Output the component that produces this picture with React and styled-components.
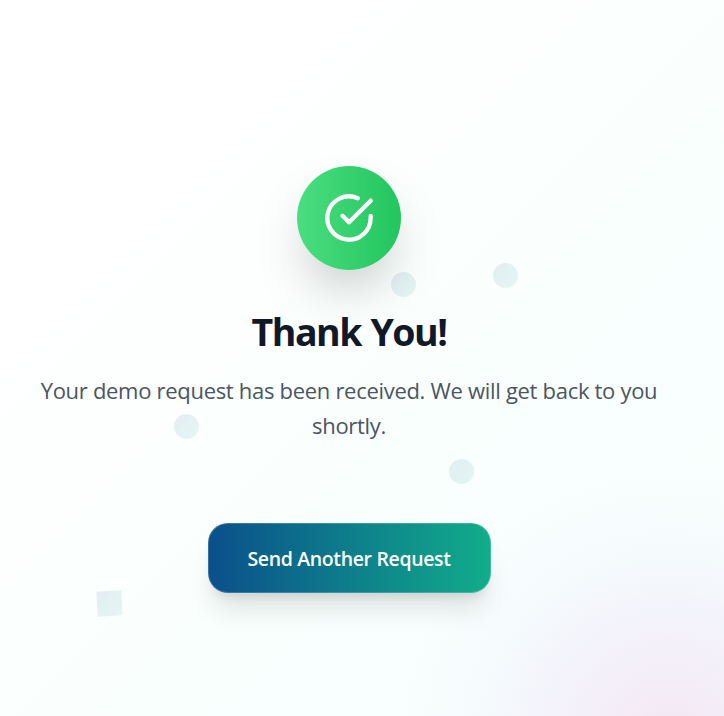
import React from "react";
import styled, { createGlobalStyle } from "styled-components";

const GlobalStyle = createGlobalStyle`
  *, *::before, *::after { box-sizing: border-box; }
  body { margin: 0; }
`;

const Page = styled.main`
  position: relative;
  display: flex;
  flex-direction: column;
  align-items: center;
  width: 100%;
  height: 716px;
  padding: 166px 26px 0 0;
  overflow: hidden;
  background: linear-gradient(135deg, #ffffff 0%, #fefffe 25%, #fafffe 55%, #f7fffd 100%);
  font-family: "Segoe UI", "Open Sans", "Noto Sans", sans-serif;
  text-align: center;
`;

const Glow = styled.div`
  position: absolute;
  left: 400px;
  top: 470px;
  width: 540px;
  height: 540px;
  background: radial-gradient(
    closest-side,
    rgba(242, 222, 242, 0.75) 0%,
    rgba(242, 227, 244, 0.65) 20%,
    rgba(240, 230, 247, 0.58) 38%,
    rgba(240, 236, 250, 0.46) 56%,
    rgba(240, 246, 252, 0.35) 76%,
    rgba(246, 253, 254, 0) 100%
  );
`;

const Particle = styled.span`
  position: absolute;
  left: ${(p) => p.$x}px;
  top: ${(p) => p.$y}px;
  width: 25px;
  height: 25px;
  border-radius: ${(p) => (p.$square ? "0" : "50%")};
  transform: rotate(${(p) => (p.$square ? -3 : 0)}deg);
  background: linear-gradient(135deg, #0a4f8b, #11ad8a);
  opacity: 0.1;
`;

const Badge = styled.div`
  display: grid;
  place-items: center;
  width: 104px;
  height: 104px;
  border-radius: 50%;
  background: linear-gradient(90deg, #4ade80, #22c55e);
  box-shadow: 0 27px 54px -13px rgba(0, 0, 0, 0.25);
`;

const Title = styled.h1`
  position: relative;
  margin: 40px 0 0;
  color: #111827;
  font-size: 37.5px;
  font-weight: 700;
  line-height: 43px;
  letter-spacing: -1.45px;
  word-spacing: 1px;
`;

const Message = styled.p`
  position: relative;
  width: 650px;
  margin: 20px 0 0;
  color: #4b5563;
  font-size: 22px;
  line-height: 35px;
  letter-spacing: -0.3px;
`;

const Button = styled.button`
  position: relative;
  width: 283px;
  height: 70px;
  margin-top: 80px;
  padding: 2px 0 0;
  border: 1px solid rgba(255, 255, 255, 0.2);
  border-radius: 20px;
  background: linear-gradient(90deg, #0a4f8b, #11ad8a) border-box;
  box-shadow: 0 22px 27px -5px rgba(0, 0, 0, 0.1), 0 9px 11px -6px rgba(0, 0, 0, 0.1);
  color: #ffffff;
  font: 600 19.5px/30px "Segoe UI", "Open Sans", "Noto Sans", sans-serif;
  letter-spacing: -0.35px;
  cursor: pointer;
`;

const particles = [
  { x: 391, y: 272 },
  { x: 493, y: 263 },
  { x: 174, y: 414 },
  { x: 449, y: 459 },
  { x: 97, y: 590.5, square: true },
];

function CheckIcon() {
  return (
    <svg width="52" height="52" viewBox="0 0 24 24" fill="none" stroke="#fff"
      strokeWidth="2" strokeLinecap="round" strokeLinejoin="round" aria-hidden="true">
      <path d="M22 11.08V12a10 10 0 1 1-5.93-9.14" />
      <path d="m9 11 3 3L22 4" />
    </svg>
  );
}

export default function App() {
  return (
    <Page>
      <GlobalStyle />
      <Glow />
      <Badge><CheckIcon /></Badge>
      {particles.map((p) => (
        <Particle key={`${p.x}-${p.y}`} $x={p.x} $y={p.y} $square={p.square} />
      ))}
      <Title>Thank You!</Title>
      <Message>
        Your demo request has been received. We will get back to you shortly.
      </Message>
      <Button type="button">Send Another Request</Button>
    </Page>
  );
}
